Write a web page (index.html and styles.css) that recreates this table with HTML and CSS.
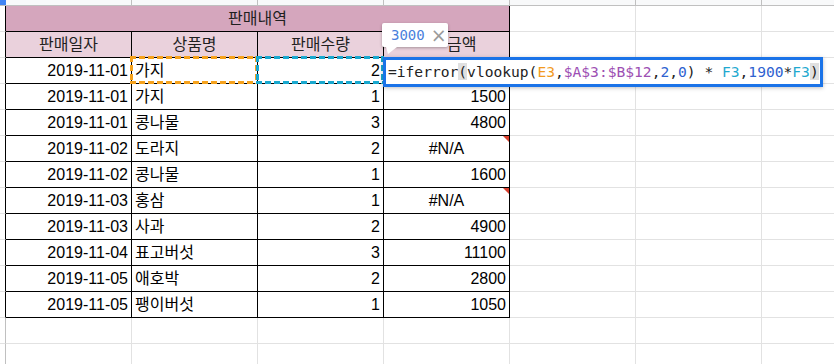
FILE: index.html
```html
<!DOCTYPE html>
<html lang="ko">
<head>
<meta charset="utf-8">
<title>판매내역</title>
<link rel="stylesheet" href="styles.css">
</head>
<body>
<div class="sheet">
  <div class="corner"></div>
  <div class="colhead"></div><div class="colhead"></div><div class="colhead"></div><div class="colhead"></div><div class="colhead"></div><div class="colhead"></div><div class="colhead last"></div>

  <div class="stub in"></div>
  <div class="t title span4">판매내역</div>
  <div class="c"></div><div class="c"></div><div class="c last"></div>

  <div class="stub in"></div>
  <div class="t head">판매일자</div><div class="t head">상품명</div><div class="t head">판매수량</div><div class="t head head-amt">금액</div>
  <div class="c"></div><div class="c"></div><div class="c last"></div>

  <div class="stub in"></div>
  <div class="t num">2019-11-01</div><div class="t txt copy-src">가지</div><div class="t num copy-dst">2</div><div class="t num"></div>
  <div class="c"></div><div class="c"></div><div class="c last"></div>

  <div class="stub in"></div>
  <div class="t num">2019-11-01</div><div class="t txt">가지</div><div class="t num">1</div><div class="t num">1500</div>
  <div class="c"></div><div class="c"></div><div class="c last"></div>

  <div class="stub in"></div>
  <div class="t num">2019-11-01</div><div class="t txt">콩나물</div><div class="t num">3</div><div class="t num">4800</div>
  <div class="c"></div><div class="c"></div><div class="c last"></div>

  <div class="stub in"></div>
  <div class="t num">2019-11-02</div><div class="t txt">도라지</div><div class="t num">2</div><div class="t err">#N/A</div>
  <div class="c"></div><div class="c"></div><div class="c last"></div>

  <div class="stub in"></div>
  <div class="t num">2019-11-02</div><div class="t txt">콩나물</div><div class="t num">1</div><div class="t num">1600</div>
  <div class="c"></div><div class="c"></div><div class="c last"></div>

  <div class="stub in"></div>
  <div class="t num">2019-11-03</div><div class="t txt">홍삼</div><div class="t num">1</div><div class="t err">#N/A</div>
  <div class="c"></div><div class="c"></div><div class="c last"></div>

  <div class="stub in"></div>
  <div class="t num">2019-11-03</div><div class="t txt">사과</div><div class="t num">2</div><div class="t num">4900</div>
  <div class="c"></div><div class="c"></div><div class="c last"></div>

  <div class="stub in"></div>
  <div class="t num">2019-11-04</div><div class="t txt">표고버섯</div><div class="t num">3</div><div class="t num">11100</div>
  <div class="c"></div><div class="c"></div><div class="c last"></div>

  <div class="stub in"></div>
  <div class="t num">2019-11-05</div><div class="t txt">애호박</div><div class="t num">2</div><div class="t num">2800</div>
  <div class="c"></div><div class="c"></div><div class="c last"></div>

  <div class="stub in"></div>
  <div class="t num">2019-11-05</div><div class="t txt">팽이버섯</div><div class="t num">1</div><div class="t num">1050</div>
  <div class="c"></div><div class="c"></div><div class="c last"></div>

  <div class="stub"></div>
  <div class="c"></div><div class="c"></div><div class="c"></div><div class="c"></div><div class="c"></div><div class="c"></div><div class="c last"></div>

  <div class="stub"></div>
  <div class="c"></div><div class="c"></div><div class="c"></div><div class="c"></div><div class="c"></div><div class="c"></div><div class="c last"></div>

  <div class="tip"><span class="tip-val">3000</span><span class="tip-x">×</span></div>

  <div class="editor"><span class="tx">=iferror</span><span class="paren">(</span><span class="tx">vlookup(</span><span class="r1">E3</span><span class="tx">,</span><span class="r2">$A$3:$B$12</span><span class="tx">,</span><span class="n">2</span><span class="tx">,</span><span class="n">0</span><span class="tx">) * </span><span class="r3">F3</span><span class="tx">,</span><span class="n">1900</span><span class="tx">*</span><span class="r3">F3</span><span class="paren">)</span></div>
</div>
</body>
</html>
```

FILE: styles.css
```css
html, body {
  margin: 0;
  padding: 0;
  background: #ffffff;
}

.sheet {
  position: relative;
  display: grid;
  grid-template-columns: 6px repeat(6, 126px) 1fr;
  grid-template-rows: 6px repeat(14, 26px);
  width: 834px;
  height: 364px;
  overflow: hidden;
  font-family: "Liberation Sans", "Noto Sans CJK KR", sans-serif;
  font-size: 16px;
  color: #000;
}

.sheet > div {
  box-sizing: border-box;
}

.corner {
  background: #4285f4;
  border-bottom: 1px solid #c0c0c0;
}

.colhead {
  background: #f8f9fa;
  border-right: 1px solid #c0c0c0;
  border-bottom: 1px solid #c0c0c0;
}

.stub {
  background: #fff;
  border-right: 1px solid #c0c0c0;
  border-bottom: 1px solid #e2e2e2;
}

.stub.in {
  border-right-color: #000;
}

.c {
  border-right: 1px solid #e2e2e2;
  border-bottom: 1px solid #e2e2e2;
}

.last {
  border-right: none;
}

.t {
  position: relative;
  border-right: 1px solid #000;
  border-bottom: 1px solid #000;
  line-height: 25px;
  padding: 0 3px;
  white-space: nowrap;
  overflow: hidden;
}

.span4 {
  grid-column: span 4;
}

.title {
  background: #d5a6bd;
  text-align: center;
  color: #1f1f1f;
}

.head {
  background: #ead1dc;
  text-align: center;
  color: #1f1f1f;
}

.head-amt {
  text-align: left;
  padding-left: 63px;
}

.num {
  text-align: right;
}

.txt {
  text-align: left;
}

.err {
  text-align: center;
}

.err::after {
  content: "";
  position: absolute;
  top: 0;
  right: 0;
  border-top: 6px solid #d8412f;
  border-left: 6px solid transparent;
}

.copy-src,
.copy-dst {
  overflow: visible;
  --mq: #f6a21c;
}

.copy-dst {
  --mq: #19a8cf;
}

.copy-src::after,
.copy-dst::after {
  content: "";
  position: absolute;
  left: -2px;
  top: -2px;
  right: -1px;
  bottom: -1px;
  background:
    repeating-linear-gradient(90deg, var(--mq) 0 6px, transparent 6px 9px) top left / 100% 3px no-repeat,
    repeating-linear-gradient(90deg, var(--mq) 0 6px, transparent 6px 9px) bottom left / 100% 3px no-repeat,
    repeating-linear-gradient(180deg, var(--mq) 0 6px, transparent 6px 9px) top left / 3px 100% no-repeat,
    repeating-linear-gradient(180deg, var(--mq) 0 6px, transparent 6px 9px) top right / 3px 100% no-repeat;
}

.tip {
  position: absolute;
  left: 382px;
  top: 23px;
  width: 66px;
  height: 24px;
  box-sizing: border-box;
  background: #fff;
  border-radius: 2px;
  box-shadow: 0 1px 3px rgba(0, 0, 0, 0.3);
  display: flex;
  align-items: center;
  padding-left: 9px;
  gap: 6px;
  z-index: 3;
}

.tip::after {
  content: "";
  position: absolute;
  left: 4px;
  bottom: -7px;
  border-top: 7px solid #fff;
  border-right: 9px solid transparent;
  border-left: 2px solid transparent;
}

.tip-val {
  font-family: "DejaVu Sans Mono", monospace;
  font-size: 14px;
  color: #4a7fdc;
}

.tip-x {
  font-family: "DejaVu Sans", sans-serif;
  font-size: 19px;
  color: #9a9a9a;
  line-height: 1;
}

.editor {
  position: absolute;
  left: 383px;
  top: 57px;
  width: 440px;
  height: 30px;
  box-sizing: border-box;
  border: 3px solid #1a73e8;
  background: #fff;
  box-shadow: 0 1px 4px rgba(0, 0, 0, 0.25);
  padding-left: 2px;
  font-family: "DejaVu Sans Mono", monospace;
  font-size: 14.6px;
  line-height: 24px;
  white-space: nowrap;
  color: #222;
  z-index: 2;
}

.paren {
  background: #e0e0e0;
}

.r1 { color: #f29a1d; }
.r2 { color: #9d4fb3; }
.r3 { color: #1fa9cf; }
.n  { color: #2f62d0; }
```
